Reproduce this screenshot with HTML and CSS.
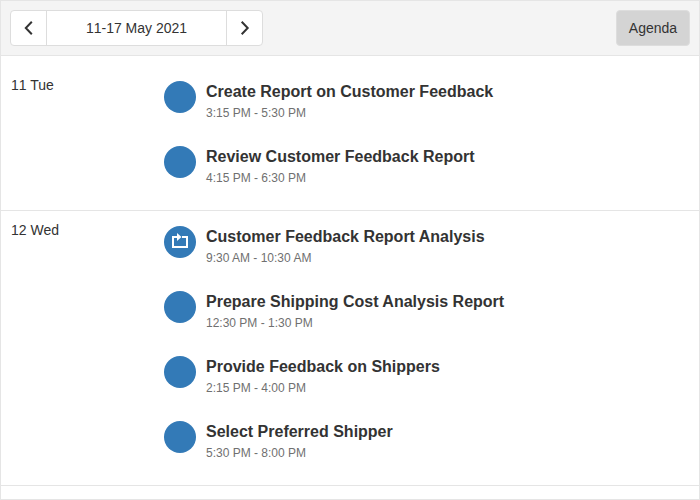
FILE: index.html
```
<!DOCTYPE html>
<html lang="en">
<head>
<meta charset="utf-8">
<title>Agenda</title>
<link rel="stylesheet" href="styles.css">
</head>
<body>
<div class="scheduler">
  <header class="toolbar">
    <div class="navigator">
      <button class="nav-button" aria-label="Previous"><svg width="18" height="18" viewBox="0 0 18 18"><path class="chevron" d="M11.8 2.8 5.8 9l6 6.2"/></svg></button>
      <button class="nav-caption">11-17 May 2021</button>
      <button class="nav-button" aria-label="Next"><svg width="18" height="18" viewBox="0 0 18 18"><path class="chevron" d="M5.7 2.8 11.7 9l-6 6.2"/></svg></button>
    </div>
    <button class="view-button">Agenda</button>
  </header>
  <main class="agenda">
    <section class="day">
      <div class="date"><span class="day-number">11</span> <span>Tue</span></div>
      <div class="events">
        <article class="event"><span class="marker"></span><div><h3 class="title">Create Report on Customer Feedback</h3><p class="time">3:15 PM - 5:30 PM</p></div></article>
        <article class="event"><span class="marker"></span><div><h3 class="title">Review Customer Feedback Report</h3><p class="time">4:15 PM - 6:30 PM</p></div></article>
      </div>
    </section>
    <section class="day">
      <div class="date"><span class="day-number">12</span> <span>Wed</span></div>
      <div class="events">
        <article class="event"><span class="marker"><svg width="32" height="32" viewBox="0 0 32 32"><path class="recurrence" d="M13 11H9v10h14V11h-5"/><path class="arrow" d="M13 7l4.5 4L13 15z"/></svg></span><div><h3 class="title">Customer Feedback Report Analysis</h3><p class="time">9:30 AM - 10:30 AM</p></div></article>
        <article class="event"><span class="marker"></span><div><h3 class="title">Prepare Shipping Cost Analysis Report</h3><p class="time">12:30 PM - 1:30 PM</p></div></article>
        <article class="event"><span class="marker"></span><div><h3 class="title">Provide Feedback on Shippers</h3><p class="time">2:15 PM - 4:00 PM</p></div></article>
        <article class="event"><span class="marker"></span><div><h3 class="title">Select Preferred Shipper</h3><p class="time">5:30 PM - 8:00 PM</p></div></article>
      </div>
    </section>
  </main>
</div>
</body>
</html>
```
FILE: styles.css
```
* {
  box-sizing: border-box;
}

body {
  margin: 0;
  background: #fff;
  color: #333;
  font: 14px/18px "Liberation Sans", Arial, sans-serif;
}

button {
  margin: 0;
  padding: 0;
  border: 0;
  background: none;
  color: inherit;
  font: inherit;
}

.scheduler {
  height: 500px;
  border: 1px solid #e5e5e5;
  overflow: hidden;
}

.toolbar {
  display: flex;
  justify-content: space-between;
  align-items: center;
  height: 55px;
  padding: 0 9px;
  border-bottom: 1px solid #e5e5e5;
  background: #f4f4f4;
}

.navigator {
  display: flex;
  width: 253px;
  height: 36px;
  border: 1px solid #ddd;
  border-radius: 4px;
  background: #fff;
}

.nav-button {
  display: flex;
  align-items: center;
  justify-content: center;
  width: 35px;
}

.nav-caption {
  width: 181px;
  border: solid #ddd;
  border-width: 0 1px;
  font-kerning: none;
}

.chevron {
  fill: none;
  stroke: #333;
  stroke-width: 2;
}

.view-button {
  width: 74px;
  height: 36px;
  border: 1px solid #ddd;
  border-radius: 4px;
  background: #d4d4d4;
}

.agenda {
  padding-top: 10px;
}

.day {
  display: flex;
  border-bottom: 1px solid #e5e5e5;
}

.date {
  width: 163px;
  padding: 10px 10px 0;
}

.day-number {
  font-kerning: none;
}

.events {
  padding-top: 15px;
}

.event {
  display: flex;
  gap: 10px;
  height: 65px;
}

.event:last-child {
  height: 64px;
}

.marker {
  width: 32px;
  height: 32px;
  border-radius: 50%;
  background: #337ab7;
}

.marker svg {
  display: block;
}

.recurrence {
  fill: none;
  stroke: #fff;
  stroke-width: 2;
}

.arrow {
  fill: #fff;
}

.title {
  margin: 0;
  font-size: 16px;
  line-height: 21px;
}

.time {
  margin: 3px 0 0;
  color: #707070;
  font-size: 12px;
  line-height: 16px;
}
```
